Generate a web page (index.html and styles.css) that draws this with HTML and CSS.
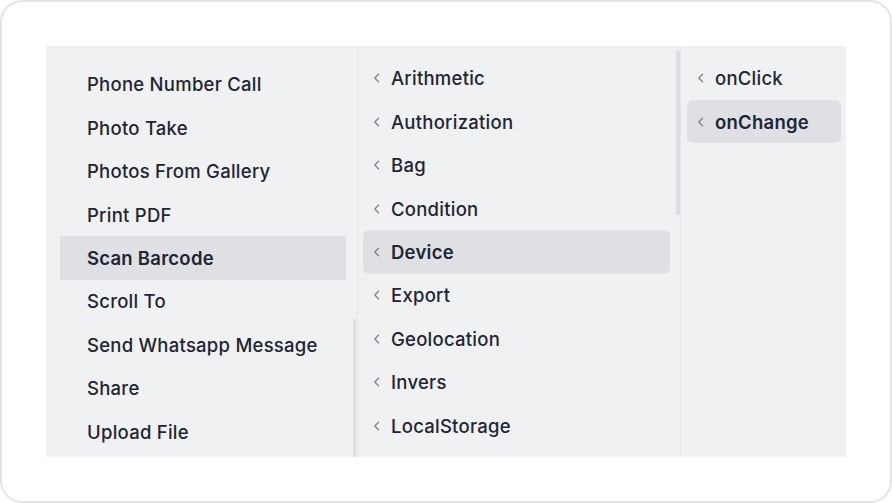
FILE: index.html
```html
<!DOCTYPE html>
<html lang="en">
<head>
<meta charset="utf-8">
<title>Actions</title>
<link rel="stylesheet" href="styles.css">
</head>
<body>
<div class="card">
  <div class="panel">
    <div class="col col-1">
      <div class="item plain">Phone Number Call</div>
      <div class="item plain">Photo Take</div>
      <div class="item plain">Photos From Gallery</div>
      <div class="item plain">Print PDF</div>
      <div class="item plain active square">Scan Barcode</div>
      <div class="item plain">Scroll To</div>
      <div class="item plain">Send Whatsapp Message</div>
      <div class="item plain">Share</div>
      <div class="item plain">Upload File</div>
      <div class="thumb thumb-1"></div>
    </div>
    <div class="col col-2">
      <div class="item"><svg class="chev" viewBox="0 0 7 10"><polyline points="5.5,1.2 1.8,5 5.5,8.8"/></svg>Arithmetic</div>
      <div class="item"><svg class="chev" viewBox="0 0 7 10"><polyline points="5.5,1.2 1.8,5 5.5,8.8"/></svg>Authorization</div>
      <div class="item"><svg class="chev" viewBox="0 0 7 10"><polyline points="5.5,1.2 1.8,5 5.5,8.8"/></svg>Bag</div>
      <div class="item"><svg class="chev" viewBox="0 0 7 10"><polyline points="5.5,1.2 1.8,5 5.5,8.8"/></svg>Condition</div>
      <div class="item active"><svg class="chev" viewBox="0 0 7 10"><polyline points="5.5,1.2 1.8,5 5.5,8.8"/></svg>Device</div>
      <div class="item"><svg class="chev" viewBox="0 0 7 10"><polyline points="5.5,1.2 1.8,5 5.5,8.8"/></svg>Export</div>
      <div class="item"><svg class="chev" viewBox="0 0 7 10"><polyline points="5.5,1.2 1.8,5 5.5,8.8"/></svg>Geolocation</div>
      <div class="item"><svg class="chev" viewBox="0 0 7 10"><polyline points="5.5,1.2 1.8,5 5.5,8.8"/></svg>Invers</div>
      <div class="item"><svg class="chev" viewBox="0 0 7 10"><polyline points="5.5,1.2 1.8,5 5.5,8.8"/></svg>LocalStorage</div>
      <div class="thumb thumb-2"></div>
    </div>
    <div class="col col-3">
      <div class="item"><svg class="chev" viewBox="0 0 7 10"><polyline points="5.5,1.2 1.8,5 5.5,8.8"/></svg>onClick</div>
      <div class="item active"><svg class="chev" viewBox="0 0 7 10"><polyline points="5.5,1.2 1.8,5 5.5,8.8"/></svg>onChange</div>
    </div>
  </div>
</div>
</body>
</html>
```

FILE: styles.css
```css
* { box-sizing: border-box; }
html, body {
  margin: 0;
  padding: 0;
  background: #ffffff;
}
body {
  font-family: Inter, "Noto Sans", sans-serif;
  color: #1e2535;
}
.card {
  width: 892px;
  height: 503px;
  border: 2px solid #e2e4e8;
  border-radius: 22px;
  background: #ffffff;
  padding: 44px;
}
.panel {
  display: flex;
  width: 800px;
  height: 411px;
  background: #f0f1f3;
  overflow: hidden;
}
.col {
  position: relative;
  display: flex;
  flex-direction: column;
  overflow: hidden;
}
.col-1 {
  width: 312px;
  padding: 16.5px 11px 0 14px;
  border-right: 1px solid #e3e5e8;
}
.col-2 {
  width: 323px;
  padding: 10.5px 10px 0 5px;
  border-right: 1px solid #e3e5e8;
}
.col-3 {
  flex: 1;
  padding: 10.5px 5px 0 6px;
}
.item {
  flex: none;
  display: flex;
  align-items: center;
  height: 43.45px;
  padding-left: 10px;
  font-size: 18.5px;
  font-weight: 500;
  letter-spacing: 0.25px;
  border-radius: 6px;
  white-space: nowrap;
}
.item.plain {
  padding-left: 27px;
}
.item.active {
  background: #dfe0e3;
  font-weight: 600;
}
.item.square {
  border-radius: 0;
}
.chev {
  width: 7px;
  height: 10px;
  margin-right: 11px;
  flex: none;
}
.chev polyline {
  fill: none;
  stroke: #858a93;
  stroke-width: 1.5;
  stroke-linecap: round;
  stroke-linejoin: round;
}
.thumb {
  position: absolute;
  background: #dcdee2;
}
.thumb-1 {
  left: 307px;
  width: 3px;
  top: 273px;
  bottom: 0;
}
.thumb-2 {
  left: 318px;
  width: 4px;
  top: 5px;
  height: 164px;
}
```
